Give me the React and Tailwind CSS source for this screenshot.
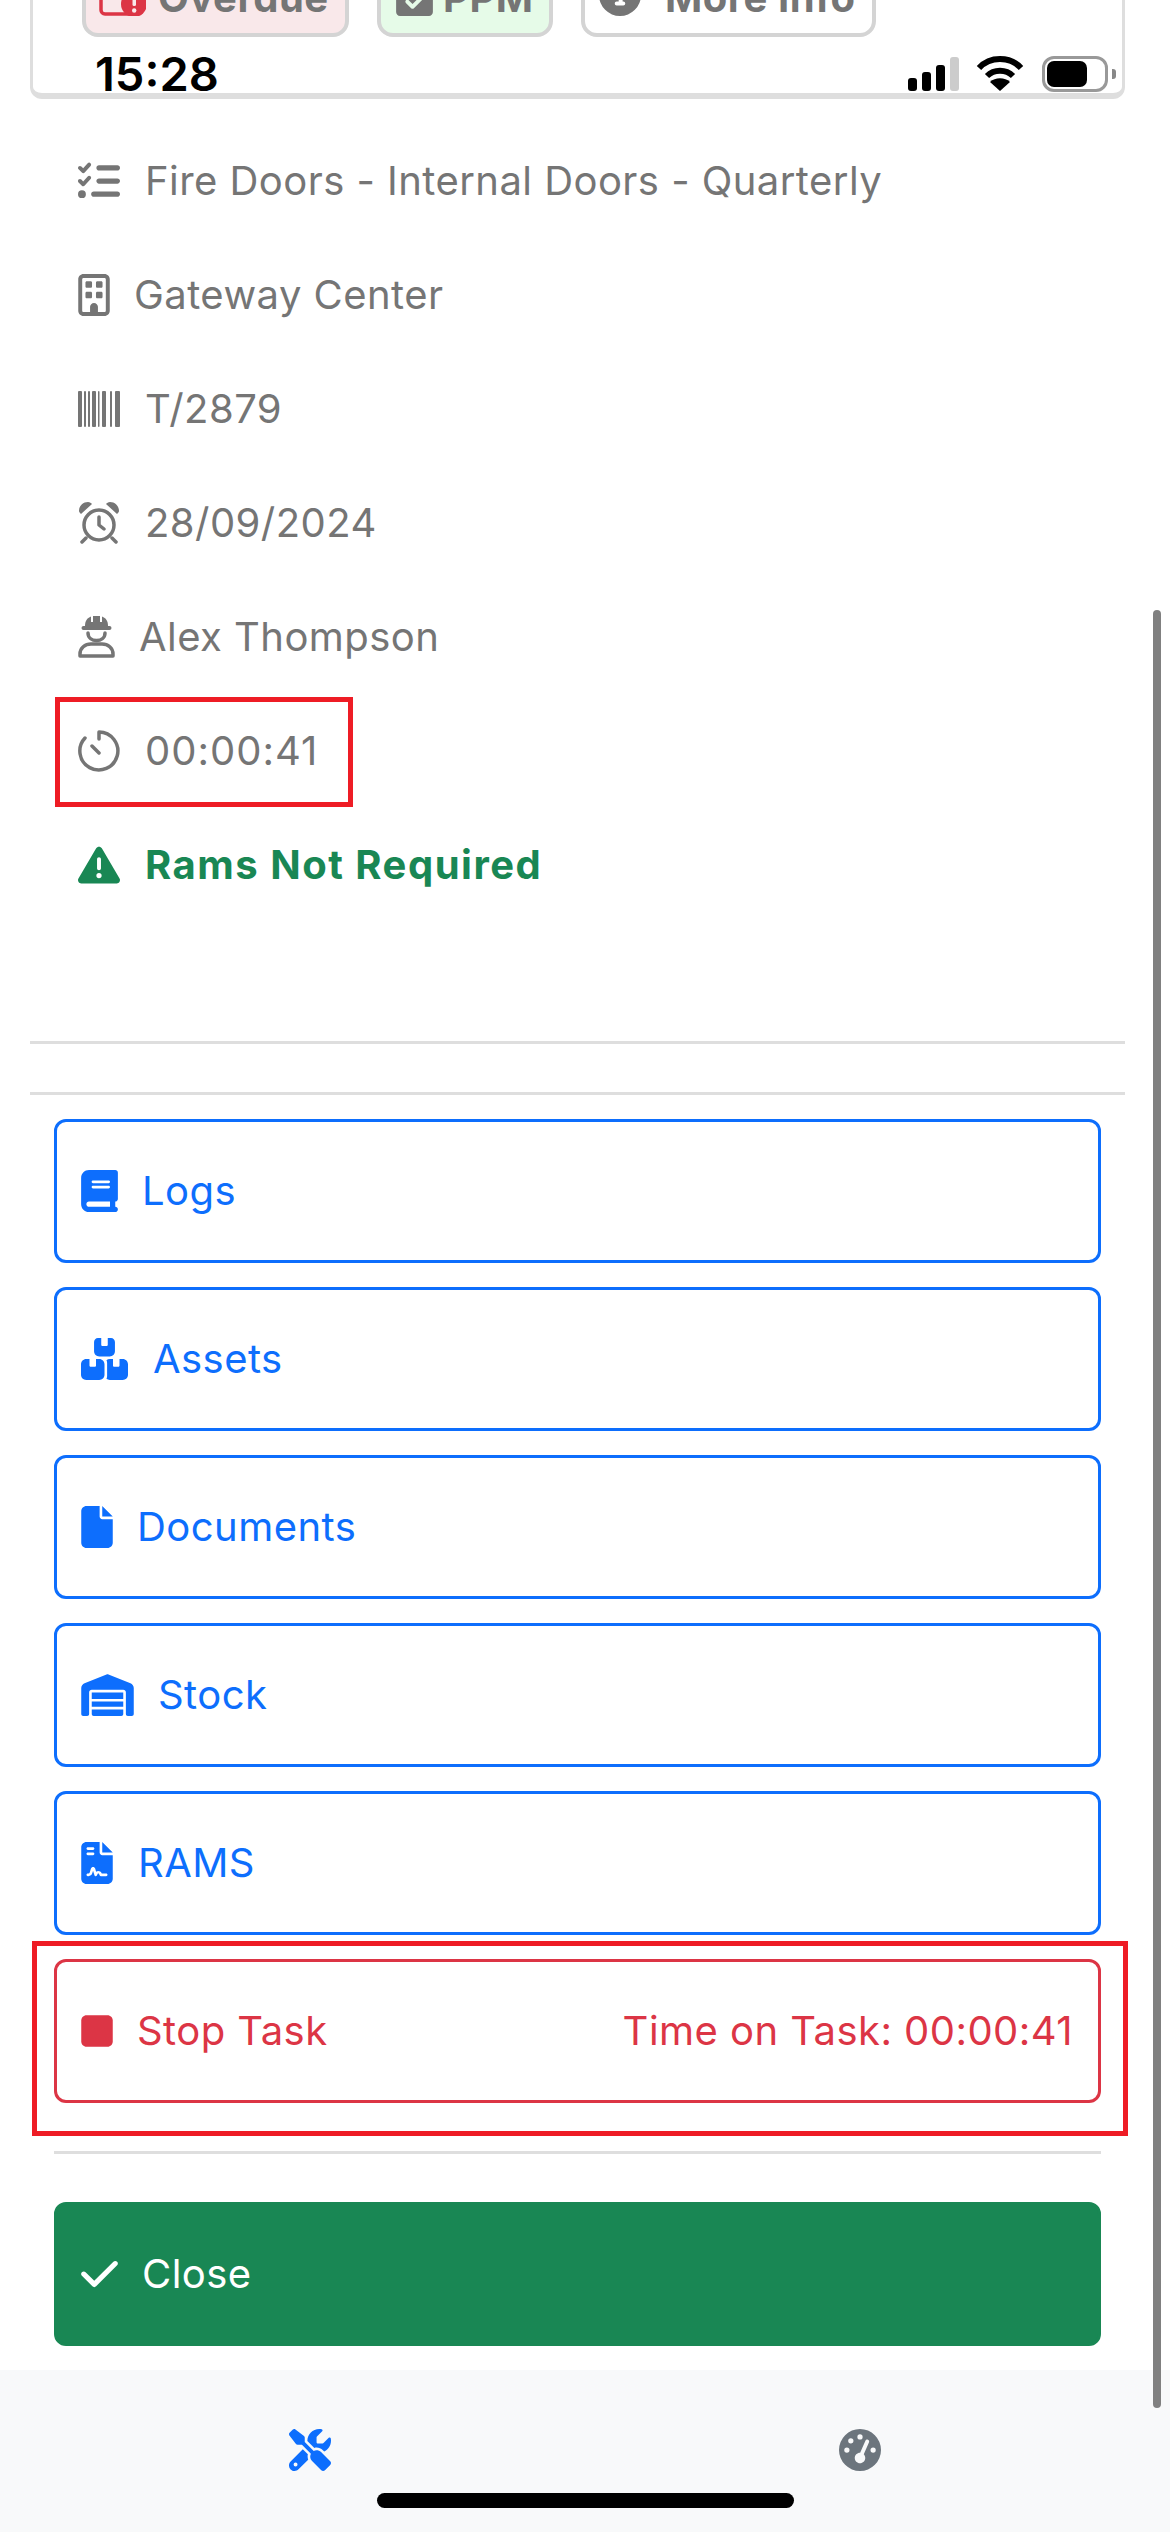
import {
  FaBook,
  FaBoxesStacked,
  FaCalendarCheck,
  FaCheck,
  FaCircleInfo,
  FaFile,
  FaFileContract,
  FaGaugeHigh,
  FaListCheck,
  FaRegBuilding,
  FaScrewdriverWrench,
  FaStop,
  FaTriangleExclamation,
  FaWarehouse,
} from "react-icons/fa6";

function BarcodeIcon() {
  const bars = [
    [0, 4],
    [6, 2],
    [10, 2],
    [14, 4],
    [20, 1.5],
    [24, 4],
    [32, 2],
    [37, 5],
  ];
  return (
    <svg viewBox="0 0 42 36" className="w-[42px] h-[36px]" fill="currentColor">
      {bars.map(([x, w]) => (
        <rect key={x} x={x} y="0" width={w} height="36" rx="1" />
      ))}
    </svg>
  );
}

function AlarmIcon() {
  return (
    <svg viewBox="0 0 42 42" className="w-[42px] h-[42px]" fill="none" stroke="currentColor" strokeWidth="3.5" strokeLinecap="round" strokeLinejoin="round">
      <circle cx="21" cy="23" r="15" />
      <path d="M21 15v8l5 4M8 36l-4 4M34 36l4 4" />
      <path d="M1 9C1 4 5 0 10 0c2 0 3 1 4 2L3 12C2 11 1 10 1 9zM41 9c0-5-4-9-9-9-2 0-3 1-4 2l11 10c1-1 2-2 2-3z" fill="currentColor" stroke="none" />
    </svg>
  );
}

function WorkerIcon() {
  return (
    <svg viewBox="0 0 37 42" className="w-[37px] h-[42px]" fill="none" stroke="currentColor">
      <path d="M7 10c0-5 2-8 6-9.500V6h2V0h7v6h2V.5c4 1.500 6 4.500 6 9.500h1.500a2 2 0 0 1 0 4h-26a2 2 0 0 1 0-4z" fill="currentColor" stroke="none" />
      <path d="M10 17c0 10 17 10 17 0" strokeWidth="3.500" strokeLinecap="round" />
      <path d="M2 40v-2c0-6 5-10 11-10h11c6 0 11 4 11 10v2z" strokeWidth="3.500" strokeLinejoin="round" />
    </svg>
  );
}

function TimerIcon() {
  return (
    <svg viewBox="0 0 42 42" className="w-[42px] h-[42px]" fill="none" stroke="currentColor" strokeWidth="3.500" strokeLinecap="round">
      <path d="M21 2a19 19 0 1 1-14 6M21 2v7M14 16l7 7" />
    </svg>
  );
}

function OverdueIcon() {
  return (
    <svg viewBox="0 0 47 42" className="w-[47px] h-[42px] text-[#dc3545]">
      <path d="M2 8h30v32H6a4 4 0 0 1-4-4z" fill="none" stroke="currentColor" strokeWidth="3.500" />
      <circle cx="35" cy="30" r="13" fill="currentColor" />
      <rect x="33.500" y="22" width="3.500" height="10" rx="1.500" fill="#f9e8ea" />
      <circle cx="35.200" cy="36.500" r="2.200" fill="#f9e8ea" />
    </svg>
  );
}

function Badge({ icon, label, className }) {
  return (
    <div className={`flex items-center h-[84px] rounded-[16px] border-[4px] border-[#d4d4d4] font-bold tracking-[0.5px] text-[#757575] ${className}`}>
      {icon}
      <span className="pt-[6px] leading-none">{label}</span>
    </div>
  );
}

function InfoRow({ icon, gap, children, className = "text-[#757575] tracking-[0.45px]" }) {
  return (
    <div className={`flex items-center h-[114px] pl-[78px] ${className}`}>
      <span className="flex items-center" style={{ marginRight: gap }}>
        {icon}
      </span>
      {children}
    </div>
  );
}

function ActionButton({ icon, gap, label, right, tone = "blue" }) {
  const toneClass =
    tone === "red"
      ? "border-[#dc3545] text-[#dc3545]"
      : tone === "green"
      ? "border-[#198754] bg-[#198754] text-white"
      : "border-[#0d6efd] text-[#0d6efd]";
  return (
    <div className={`flex items-center justify-between h-[144px] rounded-[12px] border-[3px] pl-[24px] pr-[25px] tracking-[0.45px] ${toneClass}`}>
      <div className="flex items-center">
        <span className="flex items-center" style={{ marginRight: gap }}>
          {icon}
        </span>
        {label}
      </div>
      {right && <span>{right}</span>}
    </div>
  );
}

function StatusBar() {
  return (
    <div className="absolute top-[50px] left-[95px] w-[1021px] h-[43px] flex items-end justify-between">
      <span className="text-[47px] font-semibold leading-[47px] text-black -mb-[4px]">15:28</span>
      <div className="flex items-end">
        <div className="flex items-end gap-[5px] mb-[2px]">
          <span className="w-[9px] h-[13px] rounded-[3px] bg-black" />
          <span className="w-[9px] h-[19px] rounded-[3px] bg-black" />
          <span className="w-[9px] h-[26px] rounded-[3px] bg-black" />
          <span className="w-[9px] h-[34px] rounded-[3px] bg-[#cccccc]" />
        </div>
        <svg viewBox="0 0 48 36" className="w-[48px] h-[36px] ml-[17px] mb-[2px]" fill="none" stroke="black" strokeWidth="6">
          <path d="M3 13C14 1 34 1 45 13M11 21c7-7 19-7 26 0" />
          <path d="M24 36L14 27c5-5 15-5 20 0z" fill="black" stroke="none" />
        </svg>
        <div className="flex items-center ml-[18px] mb-[1px]">
          <div className="w-[66px] h-[36px] rounded-[12px] border-[3px] border-[#999999] p-[2px]">
            <div className="w-[40px] h-full rounded-[7px] bg-black" />
          </div>
          <span className="w-[4px] h-[10px] ml-[4px] rounded-r-[3px] bg-[#888888]" />
        </div>
      </div>
    </div>
  );
}

export default function App() {
  return (
    <div className="relative w-[1170px] h-[2532px] overflow-hidden bg-white text-[40px] font-['Inter',sans-serif]">
      {/* job card, scrolled up under the status bar */}
      <div className="ml-[30px] w-[1095px] -mt-[54px] h-[153px] rounded-b-[12px] border-x-[3px] border-b-[6px] border-[#dedede] pl-[49px] pt-[7px]">
        <div className="flex gap-[28px]">
          <Badge className="w-[267px] pl-[13px] gap-[12px] bg-[#f9e8ea]" icon={<OverdueIcon />} label="Overdue" />
          <Badge className="w-[176px] pl-[15px] gap-[10px] bg-[#e6fbe8]" icon={<FaCalendarCheck className="w-[37px] h-[42px]" />} label="PPM" />
          <Badge className="w-[295px] pl-[14px] gap-[24px] bg-white" icon={<FaCircleInfo className="w-[42px] h-[42px]" />} label="More Info" />
        </div>
      </div>
      <StatusBar />

      <div className="pt-[25px]">
        <InfoRow icon={<FaListCheck className="w-[42px] h-[42px]" />} gap="25px">Fire Doors - Internal Doors - Quarterly</InfoRow>
        <InfoRow icon={<FaRegBuilding className="w-[32px] h-[42px]" />} gap="24px">Gateway Center</InfoRow>
        <InfoRow icon={<BarcodeIcon />} gap="25px">T/2879</InfoRow>
        <InfoRow icon={<AlarmIcon />} gap="25px">28/09/2024</InfoRow>
        <InfoRow icon={<WorkerIcon />} gap="24px">Alex Thompson</InfoRow>
        <InfoRow icon={<TimerIcon />} gap="25px" className="text-[#757575] tracking-[1px]">00:00:41</InfoRow>
        <InfoRow icon={<FaTriangleExclamation className="w-[42px] h-[42px]" />} gap="25px" className="text-[#198754] font-bold tracking-[1.5px]">
          Rams Not Required
        </InfoRow>
      </div>

      <hr className="ml-[30px] w-[1095px] mt-[119px] h-[3px] border-0 bg-[#dedede]" />
      <hr className="ml-[30px] w-[1095px] mt-[48px] h-[3px] border-0 bg-[#dedede]" />

      <div className="ml-[54px] w-[1047px] mt-[24px] flex flex-col gap-[24px]">
        <ActionButton icon={<FaBook className="w-[37px] h-[42px]" />} gap="24px" label="Logs" />
        <ActionButton icon={<FaBoxesStacked className="w-[47px] h-[42px]" />} gap="25px" label="Assets" />
        <ActionButton icon={<FaFile className="w-[32px] h-[42px]" />} gap="24px" label="Documents" />
        <ActionButton icon={<FaWarehouse className="w-[53px] h-[42px]" />} gap="24px" label="Stock" />
        <ActionButton icon={<FaFileContract className="w-[32px] h-[42px]" />} gap="25px" label="RAMS" />
        <ActionButton icon={<FaStop className="w-[32px] h-[42px]" />} gap="24px" label="Stop Task" right="Time on Task: 00:00:41" tone="red" />
      </div>

      <hr className="ml-[54px] w-[1047px] mt-[48px] h-[3px] border-0 bg-[#dedede]" />

      <div className="ml-[54px] w-[1047px] mt-[48px]">
        <ActionButton icon={<FaCheck className="w-[37px] h-[42px]" />} gap="24px" label="Close" tone="green" />
      </div>

      <nav className="mt-[24px] h-[162px] bg-[#f8f9fa] px-[289px] pt-[59px] flex justify-between items-start">
        <FaScrewdriverWrench className="w-[42px] h-[42px] text-[#0d6efd]" />
        <FaGaugeHigh className="w-[42px] h-[42px] text-[#6c757d]" />
      </nav>

      {/* markup drawn over the screenshot */}
      <div className="absolute left-[55px] top-[697px] w-[298px] h-[110px] border-[5px] border-[#ee1c25]" />
      <div className="absolute left-[32px] top-[1941px] w-[1096px] h-[195px] border-[5px] border-[#ee1c25]" />

      {/* scrollbar and home indicator */}
      <div className="absolute left-[1153px] top-[610px] w-[8px] h-[1798px] rounded-full bg-[#808080]" />
      <div className="absolute left-[377px] top-[2493px] w-[417px] h-[15px] rounded-full bg-black" />
    </div>
  );
}
